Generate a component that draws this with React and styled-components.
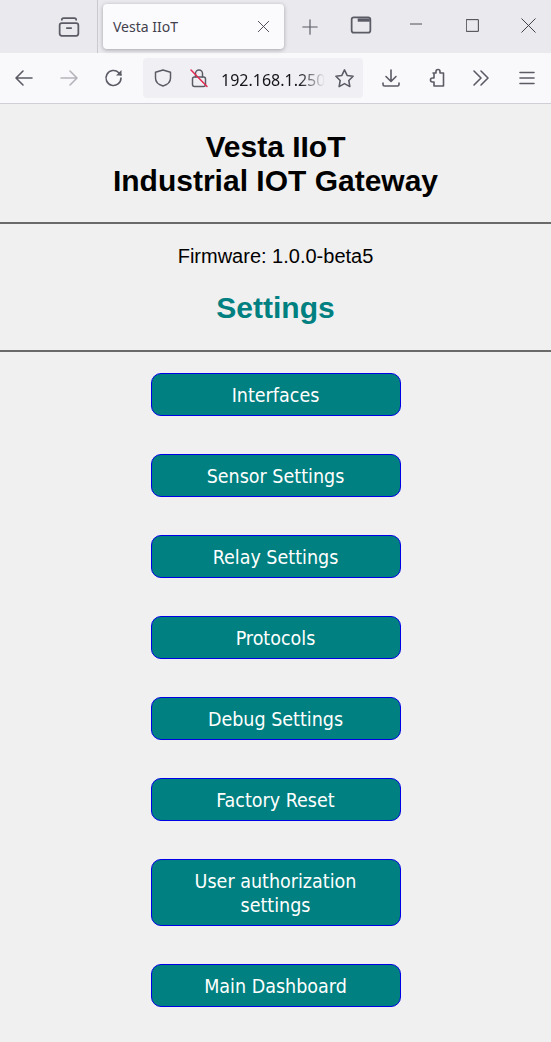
import styled, { createGlobalStyle } from 'styled-components'

const GlobalStyle = createGlobalStyle`
  html, body {
    margin: 0;
    padding: 0;
    background: #f0f0f0;
  }
`

// browser chrome
const Browser = styled.div`
  width: 551px;
  height: 1042px;
  overflow: hidden;
  background: #f0f0f0;
`
const TabStrip = styled.div`
  display: flex;
  align-items: center;
  height: 53px;
  background: #e9e9ee;
  color: #5b5b66;
`
const IconSlot = styled.div`
  display: flex;
  align-items: center;
  justify-content: center;
  flex: none;
  width: ${(p) => p.$w || 45}px;
  margin-left: ${(p) => p.$ml || 0}px;
  padding-bottom: ${(p) => p.$pb || 0}px;
  color: ${(p) => p.$color || 'inherit'};
`
const TabDivider = styled.div`
  flex: none;
  width: 1px;
  height: 53px;
  margin-left: 6px;
  background: #c9c9ce;
`
const Tab = styled.div`
  display: flex;
  align-items: center;
  justify-content: space-between;
  flex: none;
  box-sizing: border-box;
  width: 181px;
  height: 45px;
  margin-left: 5px;
  padding: 0 14px 0 10px;
  background: #fbfbfd;
  border-radius: 4px;
  box-shadow: 0 1px 4px rgba(0, 0, 0, 0.3);
  font: 14px 'Noto Sans', sans-serif;
  color: #42414d;
`
const Toolbar = styled.div`
  display: flex;
  align-items: center;
  box-sizing: border-box;
  height: 51px;
  background: #f9f9fb;
  border-bottom: 1px solid #cfcfd8;
  color: #5b5b66;
`
const UrlBar = styled.div`
  display: flex;
  align-items: center;
  flex: none;
  box-sizing: border-box;
  width: 220px;
  height: 40px;
  margin-left: 6px;
  padding: 0 8px 0 10px;
  background: #f0f0f4;
  border-radius: 4px;
`
const LockIcon = styled.span`
  display: flex;
  margin-left: 16px;
`
const StarIcon = styled.span`
  display: flex;
  margin-left: auto;
`
const UrlText = styled.span`
  width: 104px;
  margin-left: 12px;
  margin-top: 3px;
  overflow: hidden;
  white-space: nowrap;
  font: 16px 'Noto Sans', sans-serif;
  color: #15141a;
  -webkit-mask-image: linear-gradient(to right, #000 75%, transparent 100%);
  mask-image: linear-gradient(to right, #000 75%, transparent 100%);
`

// page
const Page = styled.main`
  font-family: 'Liberation Sans', Arial, sans-serif;
  text-align: center;
  color: #000;
`
const Heading = styled.h1`
  margin: 0;
  padding-top: 26px;
  padding-bottom: 24px;
  font-size: 30px;
  line-height: 34px;
  font-weight: bold;
`
const Rule = styled.hr`
  margin: 0;
  border: none;
  height: 2px;
  background: #6a6a6a;
`
const Firmware = styled.p`
  margin: 0;
  padding-top: 21px;
  font-size: 20px;
  line-height: 23px;
`
const SectionTitle = styled.h2`
  margin: 0;
  padding-top: 22px;
  padding-bottom: 25px;
  font-size: 30px;
  line-height: 35px;
  font-weight: bold;
  color: #008080;
`
const ButtonList = styled.div`
  display: flex;
  flex-direction: column;
  align-items: center;
  gap: 38px;
  padding-top: 21px;
`
const Button = styled.button`
  box-sizing: border-box;
  width: 250px;
  min-height: 43px;
  padding: 10px 20px 7px;
  background: #008080;
  border: 1px solid #0000e6;
  border-radius: 10px;
  font-family: 'DejaVu Sans Condensed', 'DejaVu Sans', sans-serif;
  font-stretch: condensed;
  font-size: 19.5px;
  line-height: 24px;
  color: #fff;
`

const Svg = ({ size = 20, sw = 1.6, children }) => (
  <svg width={size} height={size} viewBox='0 0 20 20' fill='none' stroke='currentColor' strokeWidth={sw} strokeLinecap='round' strokeLinejoin='round'>
    {children}
  </svg>
)

const buttons = [
  'Interfaces',
  'Sensor Settings',
  'Relay Settings',
  'Protocols',
  'Debug Settings',
  'Factory Reset',
  'User authorization settings',
  'Main Dashboard'
]

export default function App() {
  return (
    <Browser>
      <GlobalStyle />
      <TabStrip>
        <IconSlot $ml={46}>
          <Svg size={22}>
            <rect x='1.5' y='6.5' width='17' height='11.5' rx='2' />
            <path d='M3.5 3.5c0-1 .6-1.5 1.5-1.5h10c1 0 1.5.5 1.5 1.5M8 11h4' />
          </Svg>
        </IconSlot>
        <TabDivider />
        <Tab>
          Vesta IIoT
          <Svg size={13} sw={1.4}><path d='M2 2l16 16M18 2L2 18' /></Svg>
        </Tab>
        <IconSlot $w={52}>
          <Svg size={18} sw={1.3}><path d='M10 2v16M2 10h16' /></Svg>
        </IconSlot>
        <IconSlot $w={50} $pb={3}>
          <Svg size={22}>
            <rect x='1.5' y='3' width='17' height='14' rx='2' />
            <path d='M7 4h11v3H7z' fill='currentColor' stroke='none' />
          </Svg>
        </IconSlot>
        <IconSlot $w={53} $ml={3} $pb={5} $color='#3c3c44'>
          <Svg size={12} sw={1.5}><path d='M0 10h20' /></Svg>
        </IconSlot>
        <IconSlot $w={60} $pb={2} $color='#3c3c44'>
          <Svg size={13} sw={1.5}><rect x='1' y='1' width='18' height='18' /></Svg>
        </IconSlot>
        <IconSlot $w={52} $pb={2} $color='#3c3c44'>
          <Svg size={15} sw={1.3}><path d='M1 1l18 18M19 1L1 19' /></Svg>
        </IconSlot>
      </TabStrip>
      <Toolbar>
        <IconSlot $w={47}>
          <Svg size={20}><path d='M18 10H2M9 3l-7 7 7 7' /></Svg>
        </IconSlot>
        <IconSlot $w={43} $color='#b4b4bb'>
          <Svg size={20}><path d='M2 10h16M11 3l7 7-7 7' /></Svg>
        </IconSlot>
        <IconSlot $w={47}>
          <Svg size={20}>
            <path d='M17 10a7.5 7.5 0 1 1-2.2-5.3L17 7' />
            <path d='M17.5 2v5.5H12' fill='currentColor' stroke='none' />
          </Svg>
        </IconSlot>
        <UrlBar>
          <Svg size={20} sw={1.5}>
            <path d='M10 2l7.5 2.3V10c0 4-3 6.8-7.5 8-4.500-1.200-7.500-4-7.500-8V4.300z' />
          </Svg>
          <LockIcon>
            <svg width='20' height='20' viewBox='0 0 20 20' fill='none' strokeWidth='1.5' strokeLinecap='round'>
              <path d='M6.500 9V5.500a3.500 3.500 0 0 1 7 0V9' stroke='#5b5b66' />
              <rect x='3.500' y='9' width='13' height='9.500' rx='2' stroke='#5b5b66' />
              <path d='M2 2l16 16.500' stroke='#e22850' />
            </svg>
          </LockIcon>
          <UrlText>192.168.1.250</UrlText>
          <StarIcon>
            <Svg size={21} sw={1.5}>
              <path d='M10 1.800l2.500 5.300 5.700.8-4.100 4 1 5.800-5.100-2.800-5.100 2.800 1-5.800-4.100-4 5.700-.8z' />
            </Svg>
          </StarIcon>
        </UrlBar>
        <IconSlot $w={56}>
          <Svg size={20}><path d='M10 2v11M5 8.500l5 5 5-5M2 15v1.500c0 1 .5 1.500 1.500 1.500h13c1 0 1.500-.5 1.500-1.500V15' /></Svg>
        </IconSlot>
        <IconSlot $w={33}>
          <Svg size={20}>
            <path d='M7 5h3V3.500a2 2 0 0 1 4 0V5h3.500v13H8v-4H6.500a2 2 0 0 1 0-4H8V5z' />
          </Svg>
        </IconSlot>
        <IconSlot $w={58}>
          <Svg size={20}><path d='M3 3l7 7-7 7M10 3l7 7-7 7' /></Svg>
        </IconSlot>
        <IconSlot $w={34}>
          <Svg size={20}><path d='M3 4.500h14M3 10h14M3 15.500h14' /></Svg>
        </IconSlot>
      </Toolbar>
      <Page>
        <Heading>Vesta IIoT<br />Industrial IOT Gateway</Heading>
        <Rule />
        <Firmware>Firmware: 1.0.0-beta5</Firmware>
        <SectionTitle>Settings</SectionTitle>
        <Rule />
        <ButtonList>
          {buttons.map((label) => (
            <Button key={label}>{label}</Button>
          ))}
        </ButtonList>
      </Page>
    </Browser>
  )
}
